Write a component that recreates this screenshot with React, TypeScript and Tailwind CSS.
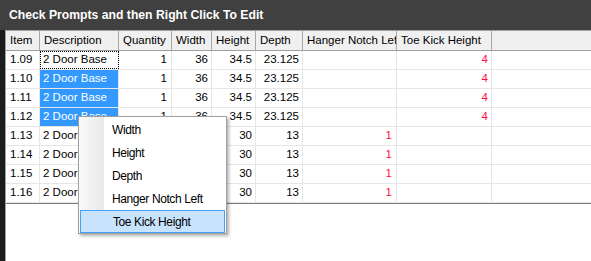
import React from 'react';

type Row = {
  item: string;
  desc: string;
  qty: string;
  width: string;
  height: string;
  depth: string;
  notch: string;
  toe: string;
};

const rows: Row[] = [
  { item: '1.09', desc: '2 Door Base', qty: '1', width: '36', height: '34.5', depth: '23.125', notch: '', toe: '4' },
  { item: '1.10', desc: '2 Door Base', qty: '1', width: '36', height: '34.5', depth: '23.125', notch: '', toe: '4' },
  { item: '1.11', desc: '2 Door Base', qty: '1', width: '36', height: '34.5', depth: '23.125', notch: '', toe: '4' },
  { item: '1.12', desc: '2 Door Base', qty: '1', width: '36', height: '34.5', depth: '23.125', notch: '', toe: '4' },
  { item: '1.13', desc: '2 Door Base', qty: '', width: '', height: '30', depth: '13', notch: '1', toe: '' },
  { item: '1.14', desc: '2 Door Base', qty: '', width: '', height: '30', depth: '13', notch: '1', toe: '' },
  { item: '1.15', desc: '2 Door Base', qty: '', width: '', height: '30', depth: '13', notch: '1', toe: '' },
  { item: '1.16', desc: '2 Door Base', qty: '', width: '', height: '30', depth: '13', notch: '1', toe: '' },
];

const headers = ['Item', 'Description', 'Quantity', 'Width', 'Height', 'Depth', 'Hanger Notch Left', 'Toe Kick Height', ''];

const menuItems = ['Width', 'Height', 'Depth', 'Hanger Notch Left', 'Toe Kick Height'];

const cols = 'grid grid-cols-[34px_79px_53px_40px_44px_47px_94px_95px_1fr]';

export default function App() {
  return (
    <div className="relative w-[591px] h-[261px] overflow-hidden bg-white flex flex-col font-['Liberation_Sans',Arial,sans-serif] text-black">
      {/* Title */}
      <div className="h-[30px] shrink-0 bg-[#404040] flex items-center pl-[9px] pt-[1px]">
        <span className="text-white font-bold text-[12.2px]">Check Prompts and then Right Click To Edit</span>
      </div>

      <div className="flex flex-1">
        <div className="w-[5px] bg-[#1c1c1c]" />
        <div className="flex-1 flex flex-col border-l border-t border-[#a0a0a0] bg-white">
          {/* Header */}
          <div className={`${cols} h-[20px] bg-[#f0f0f0] border-b border-[#a0a0a0] text-[11.5px]`}>
            {headers.map((h, i) => (
              <div
                key={i}
                className={`pl-[4px] flex items-center whitespace-nowrap overflow-hidden ${i < 8 ? 'border-r border-[#a8a8a8]' : ''}`}
              >
                {h === 'Hanger Notch Left' ? 'Hanger Notch Lef' : h}
              </div>
            ))}
          </div>

          {/* Rows */}
          {rows.map((r, idx) => {
            const selected = idx >= 1 && idx <= 3;
            return (
              <div key={r.item} className={`${cols} h-[19px] border-b border-[#e6e6e6] text-[11.5px]`}>
                <div className="pl-[4px] flex items-center border-r border-[#e6e6e6]">{r.item}</div>
                <div
                  className={`pl-[3px] flex items-center border-r border-[#e6e6e6] whitespace-nowrap overflow-hidden ${
                    selected ? 'bg-[#3399ff] text-white' : ''
                  } ${idx === 0 ? 'outline outline-1 outline-dotted outline-black -outline-offset-1' : ''}`}
                >
                  {r.desc}
                </div>
                <div className="pr-[4px] flex items-center justify-end border-r border-[#e6e6e6]">{r.qty}</div>
                <div className="pr-[3px] flex items-center justify-end border-r border-[#e6e6e6]">{r.width}</div>
                <div className="pr-[3px] flex items-center justify-end border-r border-[#e6e6e6]">{r.height}</div>
                <div className="pr-[3px] flex items-center justify-end border-r border-[#e6e6e6]">{r.depth}</div>
                <div className="pr-[4px] flex items-center justify-end border-r border-[#e6e6e6] text-[#ff1040]">{r.notch}</div>
                <div className="pr-[3px] flex items-center justify-end border-r border-[#e6e6e6] text-[#ff1040]">{r.toe}</div>
                <div />
              </div>
            );
          })}
          <div className="h-px bg-[#7a7a7a]" />
        </div>
      </div>

      {/* Context menu */}
      <div className="absolute left-[78px] top-[116px] w-[149px] h-[118px] bg-white border border-[#a0a0a0] shadow-[2px_2px_3px_rgba(0,0,0,0.3)] p-[1px]">
        <div className="absolute left-0 top-0 bottom-0 w-[25px] bg-gradient-to-r from-[#fafafa] to-[#e8e8e8]" />
        <div className="relative flex flex-col">
          {menuItems.map((m, i) => {
            const active = i === menuItems.length - 1;
            return (
              <div
                key={m}
                className={`h-[23px] flex items-center pl-[32px] text-[12px] tracking-[-0.4px] ${
                  active ? 'bg-[#c8e4fc] border border-[#4aa0f0] pl-[31px] h-[22px]' : ''
                }`}
              >
                {m}
              </div>
            );
          })}
        </div>
      </div>
    </div>
  );
}
